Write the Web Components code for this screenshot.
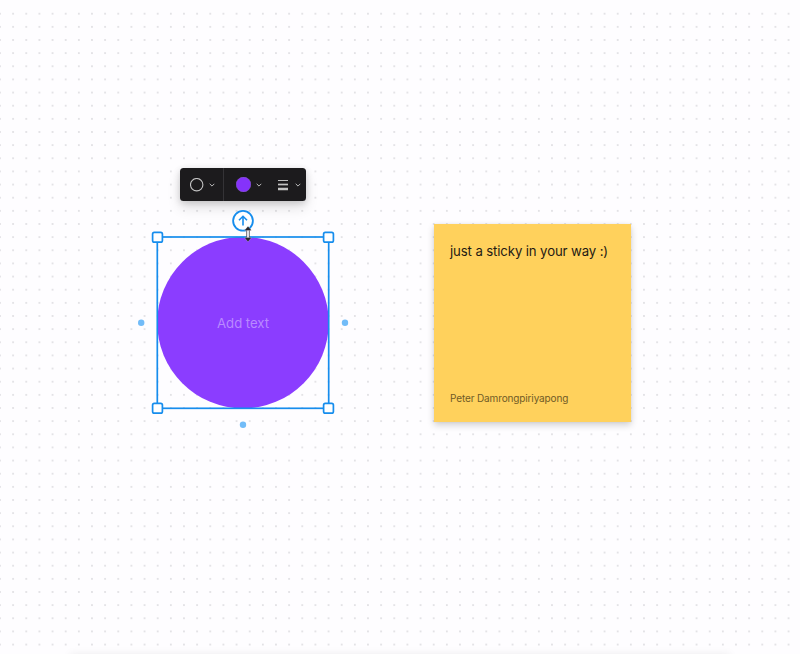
<!DOCTYPE html>
<html lang="en">
<head>
<meta charset="utf-8">
<title>Whiteboard</title>
<style>
html, body { margin: 0; height: 100%; overflow: hidden; }
body { font-family: Inter, "Liberation Sans", sans-serif; }
.toolbar { left: 180px; top: 168px; }
.shape { left: 136px; top: 209px; }
.note { left: 433.5px; top: 224px; }
.toolbar, .shape, .note { position: absolute; }
</style>
</head>
<body>
<board-canvas>
  <sticky-note class="note">just a sticky in your way :)<span slot="author">Peter Damrongpiriyapong</span></sticky-note>
  <shape-toolbar class="toolbar">
    <tool-button style="width:43px"><svg width="14" height="14" viewBox="0 0 14 14"><circle cx="6.7" cy="6.7" r="6.2" fill="none" stroke="#c4c4c4" stroke-width="1.1"/></svg></tool-button>
    <tool-button divided style="width:46px;--lead:12px"><svg width="15" height="15" viewBox="0 0 15 15"><circle cx="7.5" cy="7.5" r="7.4" fill="#8533fa" stroke="#8d6fc0" stroke-width=".4"/></svg></tool-button>
    <tool-button style="width:36px;--lead:9px;--gap:7px"><svg width="10" height="12" viewBox="0 0 10 12"><path d="M0 1.5h10" stroke="#bdbdbd"/><path d="M0 5.5h10" stroke="#c4c4c4" stroke-width="1.7"/><path d="M0 10h10" stroke="#c4c4c4" stroke-width="2.5"/></svg></tool-button>
  </shape-toolbar>
  <selected-shape class="shape">Add text</selected-shape>
</board-canvas>
<script>
const define = (name, markup) => {
  const template = document.createElement('template');
  template.innerHTML = markup;
  customElements.define(name, class extends HTMLElement {
    constructor() {
      super();
      this.attachShadow({ mode: 'open' }).append(template.content.cloneNode(true));
    }
  });
};

define('board-canvas', `
<style>
:host { display: block; position: relative; width: 800px; height: 654px; overflow: hidden; background: #fefdff; }
.grid, .fade { position: absolute; left: 0; top: 0; }
.fade { left: 70px; top: 654px; width: 660px; height: 10px; box-shadow: 0 0 8px rgba(0,0,0,.07); }
</style>
<svg class="grid" width="800" height="654">
  <defs><pattern id="dots" x="-6.57" y="7.13" width="13.143" height="13.143" patternUnits="userSpaceOnUse">
    <circle cx="6.57" cy="6.57" r=".9" fill="#d9d8dc"/>
  </pattern></defs>
  <rect y="7.2" width="800" height="647" fill="url(#dots)"/>
</svg>
<div class="fade"></div>
<slot></slot>`);

define('shape-toolbar', `
<style>
:host { display: flex; width: 126px; height: 33px; border-radius: 3.5px; background: #1c1b1d; box-shadow: 0 2px 7px rgba(0,0,0,.16), 0 7px 14px rgba(0,0,0,.11); }
</style>
<slot></slot>`);

define('tool-button', `
<style>
:host { display: flex; box-sizing: border-box; align-items: center; padding-left: var(--lead, 10px); gap: var(--gap, 5px); }
:host([divided]) { border-left: 1px solid #343336; }
::slotted(svg), svg { flex: none; }
</style>
<slot></slot>
<svg width="6" height="4" viewBox="0 0 6 4"><path d="M.7.8 3 3.1 5.3.8" fill="none" stroke="#b9b9b9"/></svg>`);

define('selected-shape', `
<style>
:host { display: block; width: 214px; height: 222px; }
.label { position: absolute; left: 21px; top: 28px; width: 172px; height: 172px; display: flex; align-items: center; justify-content: center; font-size: 13.2px; letter-spacing: -.06px; font-weight: 400; color: #b989ff; white-space: nowrap; }
svg { position: absolute; left: 0; top: 0; overflow: visible; }
</style>
<svg width="214" height="222" viewBox="136 209 214 222">
  <circle cx="243" cy="322.6" r="85.8" fill="#8b3dff"/>
  <rect x="157.3" y="237" width="171.4" height="171.3" fill="none" stroke="#168ded" stroke-width="1.7"/>
  <g fill="#fff" stroke="#168ded" stroke-width="1.7">
    <rect x="152.6" y="232.4" width="9.8" height="9.8" rx="1.7"/>
    <rect x="323.6" y="232.4" width="9.8" height="9.8" rx="1.7"/>
    <rect x="152.6" y="403.3" width="9.8" height="9.8" rx="1.7"/>
    <rect x="323.6" y="403.3" width="9.8" height="9.8" rx="1.7"/>
  </g>
  <g fill="#72bcf8">
    <circle cx="141.2" cy="322.8" r="3.2"/><circle cx="345" cy="322.8" r="3.2"/><circle cx="243" cy="424.7" r="3.2"/>
  </g>
  <circle cx="243" cy="220.8" r="9.9" fill="#fff" stroke="#168ded" stroke-width="1.8"/>
  <path d="M243 225.6v-9M239 220.3l4-4 4 4" fill="none" stroke="#168ded" stroke-width="1.6"/>
  <g>
    <path d="M246.6 229.5v9M249.4 229.5v9" stroke="#57525a" stroke-width=".8"/>
    <path d="M248 229.5v9" stroke="#e2e0e4" stroke-width="2"/>
    <path d="M248 226.6l3.2 3.6h-6.4zM248 241.4l3.2-3.6h-6.4z" fill="#29252c" stroke="#b9b4bc" stroke-width=".8" paint-order="stroke" stroke-linejoin="round"/>
  </g>
</svg>
<div class="label"><slot></slot></div>`);

define('sticky-note', `
<style>
:host { display: flex; box-sizing: border-box; flex-direction: column; justify-content: space-between; width: 197.5px; height: 197.5px; padding: 17.5px 16.5px 15.5px; background: #ffd15c; box-shadow: 0 3px 7px rgba(0,0,0,.19), 0 0 2px rgba(0,0,0,.06); color: #1f1b14; font-size: 13.2px; font-weight: 400; letter-spacing: -.12px; line-height: 18px; white-space: nowrap; }
footer { font-size: 10px; font-weight: 400; letter-spacing: -.13px; line-height: 15px; color: #705b27; }
</style>
<div><slot></slot></div>
<footer><slot name="author"></slot></footer>`);
</script>
</body>
</html>
